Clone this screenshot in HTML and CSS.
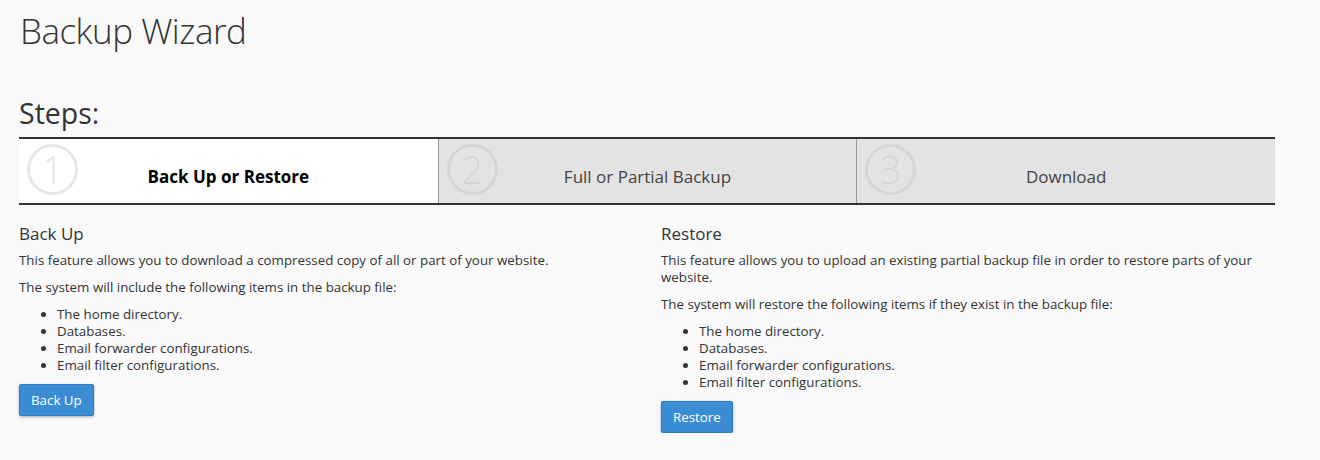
FILE: index.html
```html
<!DOCTYPE html>
<html>
<head>
<meta charset="utf-8">
<link rel="stylesheet" href="styles.css">
</head>
<body>
<div class="page">
  <h1 class="title">Backup Wizard</h1>
  <h2 class="steps-title">Steps:</h2>
  <div class="steps">
    <div class="step active"><span class="num">1</span><span class="label">Back Up or Restore</span></div>
    <div class="step"><span class="num">2</span><span class="label">Full or Partial Backup</span></div>
    <div class="step"><span class="num">3</span><span class="label">Download</span></div>
  </div>
  <div class="cols">
    <div class="col">
      <h3>Back Up</h3>
      <p>This feature allows you to download a compressed copy of all or part of your website.</p>
      <p>The system will include the following items in the backup file:</p>
      <ul>
        <li>The home directory.</li>
        <li>Databases.</li>
        <li>Email forwarder configurations.</li>
        <li>Email filter configurations.</li>
      </ul>
      <button class="btn">Back Up</button>
    </div>
    <div class="col">
      <h3>Restore</h3>
      <p>This feature allows you to upload an existing partial backup file in order to restore parts of your website.</p>
      <p>The system will restore the following items if they exist in the backup file:</p>
      <ul>
        <li>The home directory.</li>
        <li>Databases.</li>
        <li>Email forwarder configurations.</li>
        <li>Email filter configurations.</li>
      </ul>
      <button class="btn">Restore</button>
    </div>
  </div>
</div>
</body>
</html>
```

FILE: styles.css
```css
html, body {
  margin: 0;
  padding: 0;
  background: #f9f9f9;
}
body {
  font-family: "Open Sans", "Liberation Sans", sans-serif;
  color: #333;
  font-size: 13.33px;
}
.page {
  padding: 0 45px 0 19px;
}
.title {
  font-weight: 300;
  font-size: 35px;
  letter-spacing: -0.5px;
  line-height: 40px;
  margin: 11px 0 0 1px;
  color: #333;
}
.steps-title {
  font-weight: 400;
  font-size: 28.5px;
  line-height: 34px;
  margin: 45px 0 0 0;
  color: #333;
}
.steps {
  display: grid;
  grid-template-columns: 1fr 1fr 1fr;
  border-top: 2px solid #333;
  border-bottom: 2px solid #333;
  margin-top: 7px;
  height: 64px;
  background: #e3e3e3;
}
.step {
  position: relative;
  display: flex;
  align-items: center;
  justify-content: center;
  border-left: 1px solid #9a9a9a;
}
.step:first-child {
  border-left: none;
}
.step.active {
  background: #fff;
}
.num {
  position: absolute;
  left: 8px;
  top: 5px;
  width: 45px;
  height: 45px;
  border: 3px solid #d5d5d5;
  border-radius: 50%;
  color: #d5d5d5;
  font-size: 38px;
  font-weight: 300;
  line-height: 45px;
  text-align: center;
}
.step.active .num {
  border-color: #e6e6e6;
  color: #e6e6e6;
}
.label {
  font-size: 17px;
  color: #444;
  padding-top: 10px;
}
.step.active .label {
  font-weight: 700;
  color: #000;
}
.cols {
  display: grid;
  grid-template-columns: 1fr 1fr;
  column-gap: 28px;
}
h3 {
  font-size: 17px;
  font-weight: 400;
  line-height: 20px;
  margin: 19px 0 8px;
  color: #333;
}
p {
  margin: 0 0 10px;
  line-height: 17px;
}
ul {
  margin: 0 0 10px;
  padding-left: 38px;
  line-height: 17px;
}
.btn {
  font-family: "Open Sans", "Liberation Sans", sans-serif;
  font-size: 13.33px;
  color: #fff;
  background: #3a8dd5;
  border: 1px solid #2f7dc1;
  border-radius: 2px;
  padding: 0 11px;
  height: 32px;
  box-shadow: 0 1px 3px rgba(0,0,0,0.3);
}
```
